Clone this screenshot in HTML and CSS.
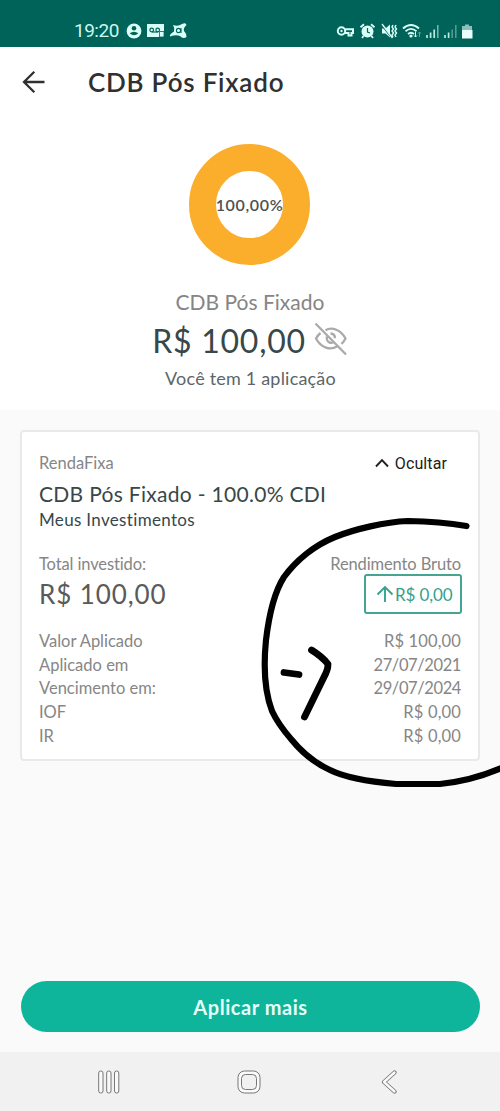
FILE: index.html
```html
<!DOCTYPE html>
<html lang="pt-BR">
<head>
<meta charset="utf-8">
<title>CDB Pós Fixado</title>
<link rel="stylesheet" href="styles.css">
</head>
<body>
<div class="screen">
  <div class="status">
    <span class="clock">19:20</span>
    <svg class="status-left" width="62" height="18" viewBox="0 0 62 18">
      <circle cx="8" cy="9" r="7.4" fill="#d9fff7"/>
      <circle cx="8" cy="6.2" r="2.3" fill="#00635a"/>
      <path d="M3.6 11.2Q8 8.2 12.4 11.2Q8 15.4 3.6 11.2Z" fill="#00635a"/>
      <path d="M21 2h17v9h-3v4H21Z" fill="#d9fff7"/>
      <g fill="none" stroke="#00635a" stroke-width="1.2"><circle cx="25.7" cy="8" r="1.8"/><circle cx="31.7" cy="8" r="1.8"/><path d="M26 10h6"/></g>
      <path d="M33.5 9.5h4.5v5.5h-4.5Z" fill="#d9fff7" stroke="#00635a" stroke-width=".8"/>
      <path d="M47 3Q52 5 56 2Q60 0 60.500 3Q57 6 58 9Q61 12 60.500 15Q57 17.500 54 14Q50 12.500 44 14.500Q43 12.500 48 9.500Q49 6 47 3Z" fill="#d9fff7"/>
      <circle cx="52.500" cy="8.500" r="2.100" fill="none" stroke="#00635a" stroke-width="1.100"/>
      <path d="M55 6v5" stroke="#00635a" stroke-width="1.100"/>
    </svg>
    <svg class="status-right" width="140" height="18" viewBox="0 0 140 18">
      <g fill="none" stroke="#d9fff7" stroke-width="2"><circle cx="5.500" cy="9" r="3.700"/><path d="M8.500 7.300h8.500v3.600h-1.500v2.600h-3v-2.600H8.700"/></g>
      <circle cx="5.500" cy="9" r="1.200" fill="#d9fff7"/>
      <circle cx="31.500" cy="9.500" r="6" fill="#d9fff7"/>
      <path d="M24.500 5.300l3.500-3M38.500 5.300l-3.500-3M27.500 14l-1.500 2M35.500 14l1.500 2" stroke="#d9fff7" stroke-width="1.800"/>
      <path d="M31.500 6v4l2.500 1" fill="none" stroke="#00635a" stroke-width="1.200"/>
      <path d="M46 6.500h3.500L54 2.500v13L49.500 11.500H46Z" fill="#d9fff7"/>
      <path d="M45 2l11 14" stroke="#00635a" stroke-width="1.600"/><path d="M46 2l10.500 14" stroke="#d9fff7" stroke-width="1.400"/>
      <path d="M57 3l-1 2 1.500 2-1.500 2 1.500 2-1.500 2 1 2M60 3l-1 2 1.500 2-1.500 2 1.500 2-1.500 2 1 2" fill="none" stroke="#d9fff7" stroke-width="1.400"/>
      <g fill="none" stroke="#d9fff7" stroke-width="1.800"><path d="M67 6.500Q75 -.5 83 6.500M69.500 9.300Q75 4.500 80.500 9.300M72 12Q75 9.400 78 12"/></g>
      <circle cx="75" cy="14" r="1.600" fill="#d9fff7"/>
      <path d="M79.500 10v5M78 13.500l1.500 1.500 1.500-1.500" fill="none" stroke="#d9fff7"/><path d="M83.500 15v-5M82 11.500l1.500-1.500 1.500 1.500" fill="none" stroke="#5fa59d"/>
      <path d="M91 13v3M94.600 10.500V16M98.200 7.500V16" stroke="#b9e8df" stroke-width="1.700"/><path d="M101.800 3v13" stroke="#7cb9b0" stroke-width="1.500"/>
      <path d="M109 13v3M112.600 10.500V16" stroke="#b9e8df" stroke-width="1.700"/><path d="M116.200 7.500V16M119.800 3v13" stroke="#579f96" stroke-width="1.500"/>
      <path d="M129 2.500h4V4h3v5h-10V4h3Z" fill="#8ac0b9"/><path d="M126 8h10.500v8.500H126Z" fill="#eafffb"/>
    </svg>
  </div>

  <header class="appbar">
    <svg width="24" height="24" viewBox="0 0 24 24"><path d="M22.500 12H2M12.300 1.700L2 12l10.300 10.300" fill="none" stroke="#303030" stroke-width="2.300"/></svg>
    <h1 class="title">CDB Pós Fixado</h1>
  </header>

  <section class="summary">
    <div class="donut"><span>100,00%</span></div>
    <div class="product">CDB Pós Fixado</div>
    <div class="balance">
      <span>R$ 100,00</span>
      <svg width="34" height="34" viewBox="0 0 34 34"><g fill="none" stroke="#aaa" stroke-width="2.300"><path d="M11.500 8.200C18 4.500 27 8 31.500 16.500Q30 19.500 27.500 22M6.500 11Q3.500 13.500 2 16.500C7 26 16.500 28.500 23 24.500M12.800 14.500C12 20 17 22.500 20.500 19.500M16.500 11.500Q21 12 21 16.200"/><path d="M1.500 1.500L32 32.500"/></g></svg>
    </div>
    <div class="count">Você tem 1 aplicação</div>
  </section>

  <main class="content">
    <article class="card">
      <div class="row kind"><span>RendaFixa</span>
        <span class="toggle"><svg width="14" height="10" viewBox="0 0 14 10"><path d="M1 8.500L7 2.200l6 6.300" fill="none" stroke="#202020" stroke-width="1.900"/></svg><span>Ocultar</span></span>
      </div>
      <div class="row name">CDB Pós Fixado - 100.0% CDI</div>
      <div class="row owner">Meus Investimentos</div>
      <div class="row heads"><span>Total investido:</span><span>Rendimento Bruto</span></div>
      <div class="row totals"><span>R$ 100,00</span>
        <span class="badge"><svg width="18" height="18" viewBox="0 0 18 18"><path d="M9 17V2M1.500 9.500L9 2l7.500 7.500" fill="none" stroke="#37a18c" stroke-width="1.900"/></svg><span>R$ 0,00</span></span>
      </div>
      <dl class="details">
        <div class="row"><dt>Valor Aplicado</dt><dd class="money">R$ 100,00</dd></div>
        <div class="row"><dt>Aplicado em</dt><dd class="date">27/07/2021</dd></div>
        <div class="row"><dt>Vencimento em:</dt><dd class="date">29/07/2024</dd></div>
        <div class="row"><dt>IOF</dt><dd class="money">R$ 0,00</dd></div>
        <div class="row"><dt>IR</dt><dd class="money">R$ 0,00</dd></div>
      </dl>
    </article>
    <button class="apply">Aplicar mais</button>
  </main>

  <nav class="nav">
    <svg width="22" height="24" viewBox="0 0 22 24"><g fill="#fafafa" stroke="#777" stroke-width="1"><rect x=".7" y="1" width="4.300" height="22" rx="2"/><rect x="8.700" y="1" width="4.300" height="22" rx="2"/><rect x="16.500" y="1" width="4.300" height="22" rx="2"/></g></svg>
    <svg width="24" height="24" viewBox="0 0 24 24"><rect x="1" y="1" width="22" height="22" rx="6.500" fill="#fafafa" stroke="#777"/><rect x="4.500" y="4.500" width="15" height="15" rx="4" fill="#f1f1f1" stroke="#777"/></svg>
    <svg width="17" height="24" viewBox="0 0 17 24"><path d="M13.500 2.500L3 12l10.500 9.500" fill="none" stroke="#777" stroke-width="4.200" stroke-linecap="round" stroke-linejoin="round"/><path d="M13.500 2.500L3 12l10.500 9.500" fill="none" stroke="#fafafa" stroke-width="2.400" stroke-linecap="round" stroke-linejoin="round"/></svg>
  </nav>

  <svg class="ink" width="500" height="1111" viewBox="0 0 500 1111">
    <g fill="none" stroke="#000" stroke-width="6.200" stroke-linecap="round" stroke-linejoin="round">
      <path d="M466.500 526Q440 521.500 408 521C385 522 355 529 335 537C313 546 295 562 284 577C275 591 269 615 266 640C263.500 665 264 690 272 711Q278 724 291 739Q308 760 330 770Q350 780 396 784L440 784Q472 781 504 767"/>
      <path stroke-width="6.800" d="M284 672.500L299 674.500M311.500 650Q322 656.500 328 664Q328 670 324 677L304.500 717"/>
    </g>
  </svg>
</div>
</body>
</html>
```
FILE: styles.css
```css
* { box-sizing: border-box; }
body { margin: 0; font-family: Lato, "Liberation Sans", sans-serif; font-variant-ligatures: none; color: #37474a; }
svg { display: block; flex: none; }
span, dt, dd { white-space: nowrap; }
.screen { position: relative; width: 500px; height: 1111px; overflow: hidden; display: flex; flex-direction: column; background: #fafafa; }
.status { height: 47px; padding: 14px 24px 0 74px; display: flex; align-items: center; background: #00635a; }
.clock { font: 19px/30px Roboto, sans-serif; letter-spacing: -.5px; color: #c9f8ef; }
.status-left { margin-left: 7px; }
.status-right { margin-left: auto; }
.appbar { height: 71px; padding: 0 22px 2px; display: flex; align-items: center; gap: 42px; background: #fff; }
.title { margin: 0; font-size: 26px; font-weight: 600; letter-spacing: .78px; color: #303030; }
.summary { height: 292px; padding-top: 26px; display: flex; flex-direction: column; align-items: center; background: #fff; }
.donut { width: 121px; height: 121px; margin-right: 1px; border: 27px solid #fbae2b; border-radius: 50%; display: flex; align-items: center; justify-content: center; font-size: 16px; font-weight: 600; letter-spacing: .65px; color: #505050; }
.product { margin-top: 24px; font-size: 21px; line-height: 26px; color: #858585; }
.balance { display: flex; align-items: center; gap: 8px; height: 51px; font-size: 32px; letter-spacing: .75px; }
.balance svg { margin-bottom: 4px; }
.count { margin-top: -1px; padding-left: 1px; font-size: 18px; line-height: 26px; letter-spacing: .2px; color: #5c6668; }
.content { flex: 1; padding: 20px 20px 20px 21px; display: flex; flex-direction: column; }
.card { height: 331px; margin-left: -1px; padding: 18px 17px; border: 2px solid #e9e9e9; border-radius: 4px; background: #fff; font-size: 16.500px; color: #868686; }
.row { display: flex; justify-content: space-between; align-items: center; }
.kind { height: 26px; padding-right: 14px; }
.toggle { display: flex; align-items: center; gap: 6px; font-family: Roboto, sans-serif; font-size: 16px; letter-spacing: .1px; color: #202020; }
.name { height: 34px; font-size: 21px; letter-spacing: .3px; color: #37474a; }
.owner { height: 19px; font-size: 17px; letter-spacing: .33px; color: #37474a; }
.heads { height: 32px; margin-top: 19px; letter-spacing: -.12px; }
.totals { height: 40px; margin: -6px -1px 0 0; font-size: 26px; letter-spacing: .9px; color: #5a5a5a; }
.badge { width: 98px; height: 40px; padding-left: 10px; display: flex; align-items: center; gap: 1px; border: 2px solid #45a593; border-radius: 3px; font-size: 17px; letter-spacing: -.1px; color: #37a18c; }
.details { margin: 15px 0 0; }
.details .row { height: 23.700px; }
dd { margin: 0; }
.money { letter-spacing: .15px; }
.date { letter-spacing: -.4px; }
.apply { height: 51px; margin-top: auto; padding: 1px 0 0; border: 0; border-radius: 26px; background: #0fb59a; font: 700 20px/51px Lato, sans-serif; letter-spacing: .55px; color: #e6fff9; }
.nav { height: 59px; padding: 0 102px 0 98px; display: flex; align-items: center; justify-content: space-between; background: #f1f1f1; }
.nav svg:nth-child(2) { margin-right: 3px; }
.ink { position: absolute; left: 0; top: 0; pointer-events: none; }
```
